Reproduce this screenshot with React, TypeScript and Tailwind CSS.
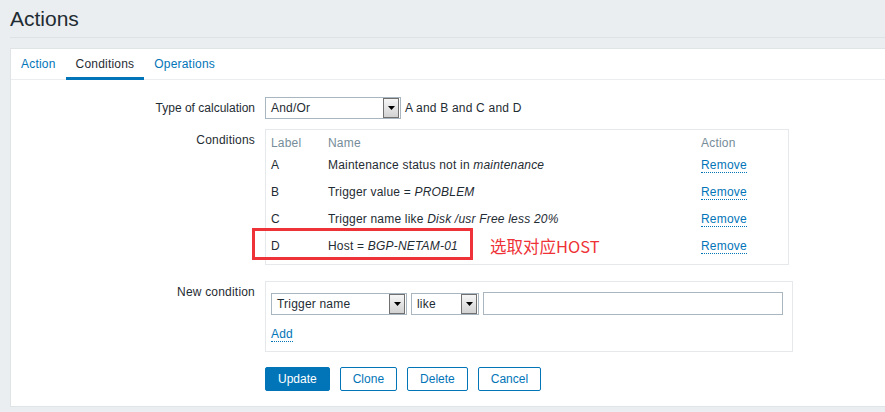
import React from "react";

const FONT = { fontFamily: '"Liberation Sans", Arial, sans-serif', letterSpacing: "0.2px" };

function Arrow() {
  return (
    <div className="w-[16px] h-[20px] mr-px flex items-center justify-center border border-[#707070] bg-gradient-to-b from-[#f6f6f6] to-[#d2d2d2]">
      <svg width="7" height="4" viewBox="0 0 7 4">
        <polygon points="0,0 7,0 3.5,4" fill="#000" />
      </svg>
    </div>
  );
}

function Select({ value, w }: { value: string; w: string }) {
  return (
    <div className={`${w} h-[22px] flex items-center border border-[#a9b6bf] bg-white`}>
      <span className="flex-1 pl-[5px] text-[12px] text-[#1f2c33] leading-[14px]">{value}</span>
      <Arrow />
    </div>
  );
}

function Remove() {
  return (
    <span className="inline-block text-[12px] leading-[14px] text-[#0275b8] border-b border-dotted border-[#0275b8]">
      Remove
    </span>
  );
}

const rows: { l: string; name: React.ReactNode }[] = [
  { l: "A", name: <>Maintenance status not in <i>maintenance</i></> },
  { l: "B", name: <>Trigger value = <i>PROBLEM</i></> },
  { l: "C", name: <>Trigger name like <i>Disk /usr Free less 20%</i></> },
  { l: "D", name: <>Host = <i>BGP-NETAM-01</i></> },
];

const btn = "h-[24px] px-[12px] rounded-[2px] border border-[#0275b8] text-[12px] tracking-normal";

export default function App() {
  return (
    <div className="w-[885px] h-[412px] bg-[#ebeef0] overflow-hidden text-[#1f2c33]" style={FONT}>
      <div className="ml-[10px] h-[38px] border-b border-[#dde2e5] flex items-center">
        <h1 className="text-[21px] leading-[24px] text-[#1f2c33] mt-[1px]" style={{ letterSpacing: 0 }}>Actions</h1>
      </div>
      <div className="ml-[10px] mt-[10px] bg-white border border-r-0 border-[#dfe4e7] pb-[15px]">
        <div className="flex border-b border-[#ebeef0] h-[31px]">
          <div className="px-[10px] h-[31px] pt-[2px] flex items-center text-[12px] text-[#0275b8] border-b-[3px] border-transparent">Action</div>
          <div className="px-[10px] h-[31px] pt-[2px] flex items-center text-[12px] text-[#1f2c33] border-b-[3px] border-[#0275b8]">Conditions</div>
          <div className="px-[10px] h-[31px] pt-[2px] flex items-center text-[12px] text-[#0275b8] border-b-[3px] border-transparent">Operations</div>
        </div>

        <div className="flex mt-[17px]">
          <div className="w-[244px] text-right text-[12px] leading-[22px] tracking-normal">Type of calculation</div>
          <div className="ml-[10px] flex items-center">
            <Select value="And/Or" w="w-[136px]" />
            <span className="ml-[4px] text-[12px]">A and B and C and D</span>
          </div>
        </div>

        <div className="flex mt-[10px]">
          <div className="w-[244px] text-right text-[12px] leading-[14px] pt-[4px]">Conditions</div>
          <div className="ml-[10px] relative w-[524px] border border-[#e6e9eb] pt-[4px] pb-[5px] pl-[5px] text-[12px]">
            <div className="grid grid-cols-[57px_373px_1fr] h-[17px] items-center text-[#768d99]">
              <span>Label</span>
              <span>Name</span>
              <span>Action</span>
            </div>
            {rows.map((r) => (
              <div key={r.l} className="grid grid-cols-[57px_373px_1fr] h-[27px] items-center">
                <span>{r.l}</span>
                <span>{r.name}</span>
                <span><Remove /></span>
              </div>
            ))}
            <div className="absolute left-[-14px] top-[98px] w-[221px] h-[32px] border-[3px] border-[#ee3237]" />
            <div
              className="absolute left-[224px] top-[104px] text-[16.5px] leading-[24px] text-[#ee3237] whitespace-nowrap"
              style={{ fontFamily: '"Noto Sans CJK SC", "Noto Sans", sans-serif', letterSpacing: 0 }}
            >
              选取对应HOST
            </div>
          </div>
        </div>

        <div className="flex mt-[16px]">
          <div className="w-[244px] text-right text-[12px] leading-[14px] pt-[4px]">New condition</div>
          <div className="ml-[10px] w-[528px] border border-[#e6e9eb] pt-[10px] pb-[15px] pl-[5px]">
            <div className="flex items-center gap-[4px]">
              <Select value="Trigger name" w="w-[136px]" />
              <Select value="like" w="w-[68px]" />
              <div className="w-[300px] h-[23px] border border-[#a9b6bf] bg-white" />
            </div>
            <div className="mt-[6px] h-[15px]">
              <span className="inline-block text-[12px] leading-[14px] text-[#0275b8] border-b border-dotted border-[#0275b8]">Add</span>
            </div>
          </div>
        </div>

        <div className="flex mt-[15px] ml-[254px] gap-[10px]">
          <button className={`${btn} bg-[#0275b8] text-white`}>Update</button>
          <button className={`${btn} bg-white text-[#0275b8]`}>Clone</button>
          <button className={`${btn} bg-white text-[#0275b8]`}>Delete</button>
          <button className={`${btn} bg-white text-[#0275b8]`}>Cancel</button>
        </div>
      </div>
    </div>
  );
}
